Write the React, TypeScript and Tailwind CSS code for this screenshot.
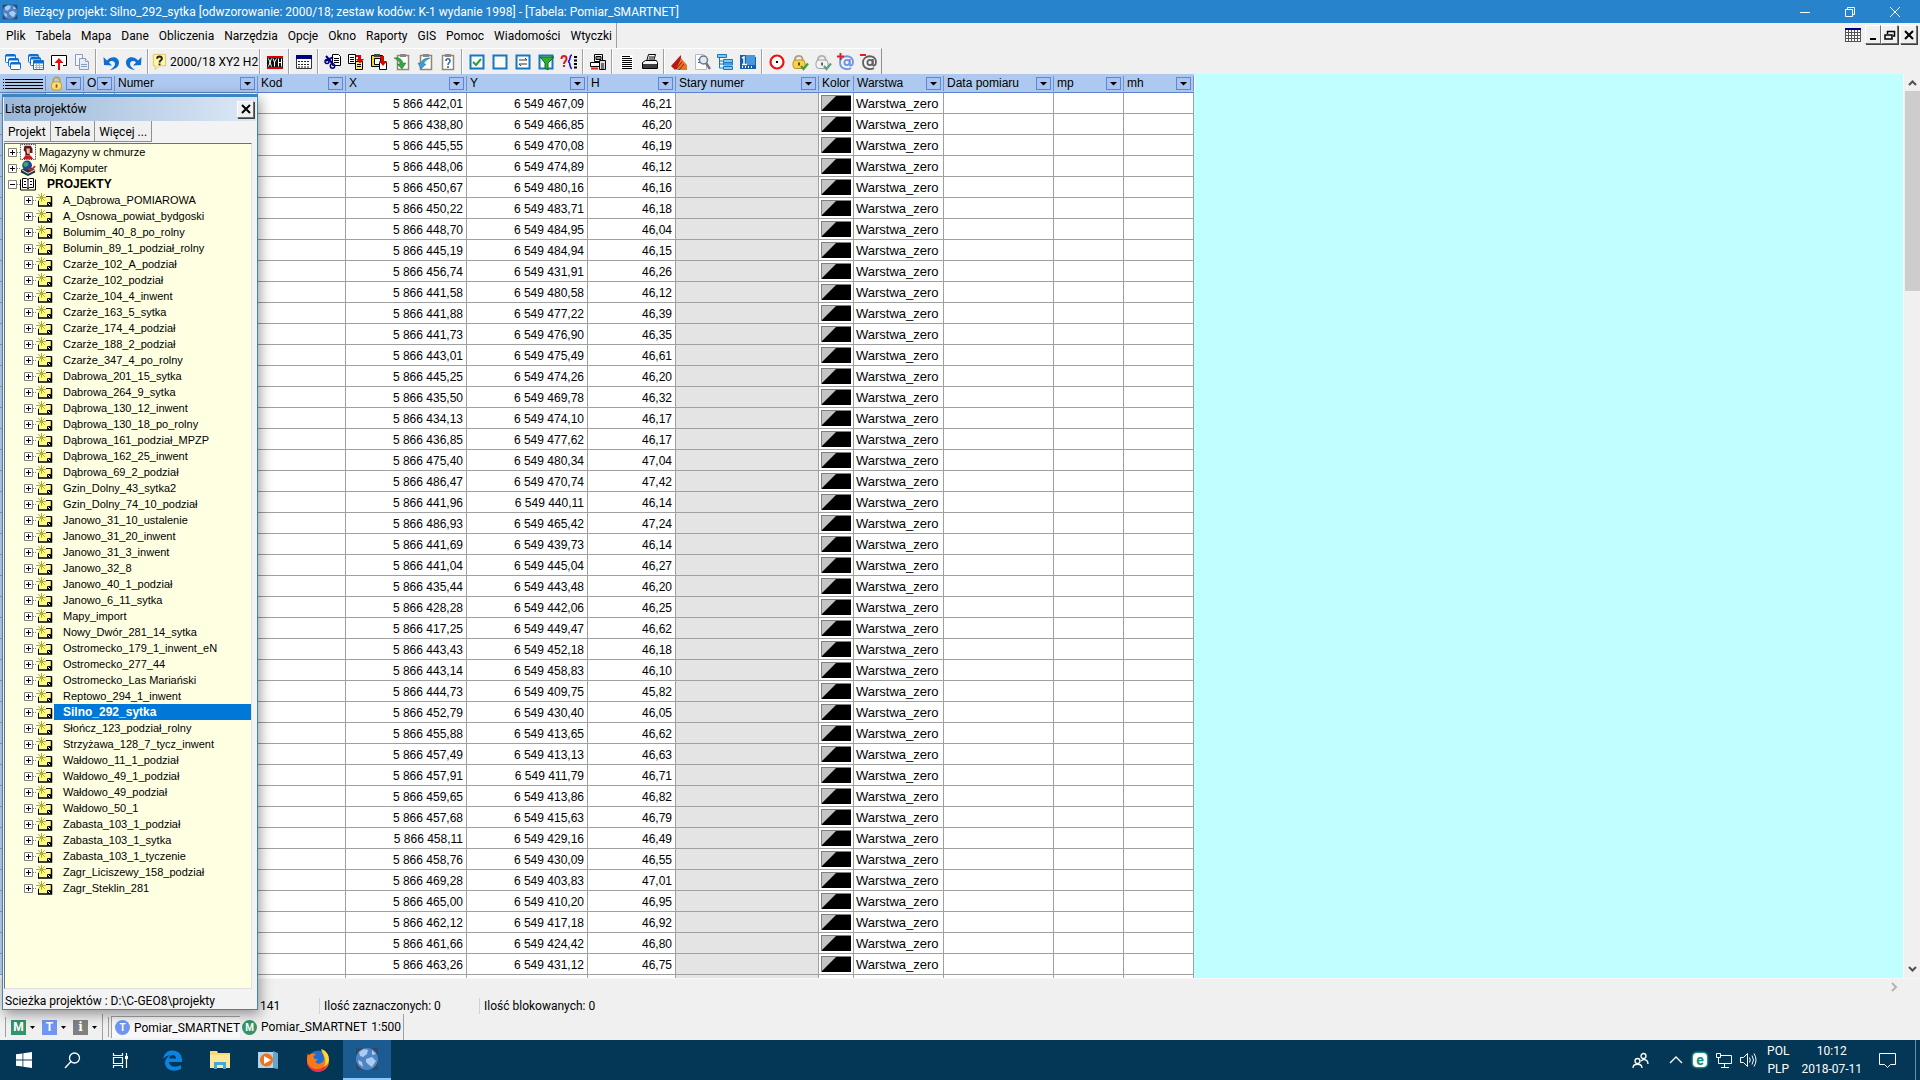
import React from "react";

type Cell = [string, string, string];

const points: Cell[] = [
  ["442,01", "467,09", "46,21"], ["438,80", "466,85", "46,20"], ["445,55", "470,08", "46,19"],
  ["448,06", "474,89", "46,12"], ["450,67", "480,16", "46,16"], ["450,22", "483,71", "46,18"],
  ["448,70", "484,95", "46,04"], ["445,19", "484,94", "46,15"], ["456,74", "431,91", "46,26"],
  ["441,58", "480,58", "46,12"], ["441,88", "477,22", "46,39"], ["441,73", "476,90", "46,35"],
  ["443,01", "475,49", "46,61"], ["445,25", "474,26", "46,20"], ["435,50", "469,78", "46,32"],
  ["434,13", "474,10", "46,17"], ["436,85", "477,62", "46,17"], ["475,40", "480,34", "47,04"],
  ["486,47", "470,74", "47,42"], ["441,96", "440,11", "46,14"], ["486,93", "465,42", "47,24"],
  ["441,69", "439,73", "46,14"], ["441,04", "445,04", "46,27"], ["435,44", "443,48", "46,20"],
  ["428,28", "442,06", "46,25"], ["417,25", "449,47", "46,62"], ["443,43", "452,18", "46,18"],
  ["443,14", "458,83", "46,10"], ["444,73", "409,75", "45,82"], ["452,79", "430,40", "46,05"],
  ["455,88", "413,65", "46,62"], ["457,49", "413,13", "46,63"], ["457,91", "411,79", "46,71"],
  ["459,65", "413,86", "46,82"], ["457,68", "415,63", "46,79"], ["458,11", "429,16", "46,49"],
  ["458,76", "430,09", "46,55"], ["469,28", "403,83", "47,01"], ["465,00", "410,20", "46,95"],
  ["462,12", "417,18", "46,92"], ["461,66", "424,42", "46,80"], ["463,26", "431,12", "46,75"],
];

const projects = [
  "A_Dąbrowa_POMIAROWA", "A_Osnowa_powiat_bydgoski", "Bolumim_40_8_po_rolny", "Bolumin_89_1_podział_rolny",
  "Czarże_102_A_podział", "Czarże_102_podział", "Czarże_104_4_inwent", "Czarże_163_5_sytka",
  "Czarże_174_4_podział", "Czarże_188_2_podział", "Czarże_347_4_po_rolny", "Dabrowa_201_15_sytka",
  "Dabrowa_264_9_sytka", "Dąbrowa_130_12_inwent", "Dąbrowa_130_18_po_rolny", "Dąbrowa_161_podział_MPZP",
  "Dąbrowa_162_25_inwent", "Dąbrowa_69_2_podział", "Gzin_Dolny_43_sytka2", "Gzin_Dolny_74_10_podział",
  "Janowo_31_10_ustalenie", "Janowo_31_20_inwent", "Janowo_31_3_inwent", "Janowo_32_8",
  "Janowo_40_1_podział", "Janowo_6_11_sytka", "Mapy_import", "Nowy_Dwór_281_14_sytka",
  "Ostromecko_179_1_inwent_eN", "Ostromecko_277_44", "Ostromecko_Las Mariański", "Reptowo_294_1_inwent",
  "Silno_292_sytka", "Słończ_123_podział_rolny", "Strzyżawa_128_7_tycz_inwent", "Wałdowo_11_1_podział",
  "Wałdowo_49_1_podział", "Wałdowo_49_podział", "Wałdowo_50_1", "Zabasta_103_1_podział",
  "Zabasta_103_1_sytka", "Zabasta_103_1_tyczenie", "Zagr_Liciszewy_158_podział", "Zagr_Steklin_281",
];

const menu = ["Plik", "Tabela", "Mapa", "Dane", "Obliczenia", "Narzędzia", "Opcje", "Okno", "Raporty", "GIS", "Pomoc", "Wiadomości", "Wtyczki"];

function Svg({ children, size = 18, box = 18 }: { children: React.ReactNode; size?: number; box?: number }) {
  return (
    <svg width={size} height={size} viewBox={`0 0 ${box} ${box}`} fill="none" aria-hidden="true" className="shrink-0">
      {children}
    </svg>
  );
}

const B = "#0f6fd0";

const icons: Record<string, React.ReactNode> = {
  windows: (
    <g stroke={B}>
      <rect x="1.500" y="1.500" width="10" height="8" rx="1" fill="#fff" /><path d="M2 2h9v1H2z" fill={B} />
      <rect x="4.500" y="5.500" width="10" height="8" rx="1" fill="#fff" /><path d="M5 6h9v1H5z" fill={B} />
      <rect x="6.500" y="9.500" width="10" height="7" rx="1" fill="#fff" /><path d="M7 10h9v1H7z" fill={B} />
    </g>
  ),
  windowsGrid: (
    <g stroke={B}>
      <rect x="1.500" y="1.500" width="10" height="8" rx="1" fill="#fff" /><path d="M2 2h9v1H2z" fill={B} />
      <rect x="3.500" y="4.500" width="10" height="8" rx="1" fill="#fff" /><path d="M4 5h9v1H4z" fill={B} />
      <path d="M6.500 7.500h10v9h-10z" fill="#fff" /><path d="M7 8h9v2H7z" fill={B} />
      <path d="M8 12.500h8M8 14.500h8M9.500 11v5M12.500 11v5" stroke="#a8b8cc" />
    </g>
  ),
  upload: (
    <g>
      <path d="M5 12.500H1.500v-10h15v10H13" stroke="#000" fill="#fff" />
      <path d="M9 5l4.500 5H10v7H8v-7H4.500z" fill="#e01010" />
    </g>
  ),
  copy: (
    <g stroke="#8b9cba" fill="#f4f7fc">
      <path d="M2.500 1.500h7v11h-7z" /><path d="M6.500 5.500h6l3 3v8h-9z" fill="#e3ecf8" />
      <path d="M12.500 5.500v3h3M8 11.500h6M8 13.500h6" />
    </g>
  ),
  undo: <path d="M1.500 4l.5 8 8 .5-3-3c2-2.500 6-1.500 6 1.500 0 2-2 4-5 6 5-.5 9-3 9-7.500C17 4 9.500 2 5 7.500z" fill={B} />,
  redo: <path d="M16.500 4l-.5 8-8 .5 3-3c-2-2.500-6-1.500-6 1.500 0 2 2 4 5 6-5-.5-9-3-9-7.500C1 4 8.500 2 13 7.500z" fill={B} />,
  noteHelp: (
    <g>
      <path d="M2.500 1.500h13v12h-7l-4 4v-4h-2z" fill="#fff6a5" stroke="#e0c860" />
      <path d="M6.500 6c0-3 5-3 5 0 0 2-2.500 2-2.500 4M9 11v2" stroke="#222" strokeWidth="2" />
    </g>
  ),
  xyh: (
    <g>
      <path d="M1 3h16v3H1zM1 13h16v3H1z" fill="#d80000" />
      <path d="M1 5h16v9H1z" fill="#111" />
      <path d="M2.500 5.500l3 8M5.500 5.500l-3 8M7 5.500L8.500 9v4.500M10.500 5.500L8.500 9M12.500 5.500v8M15.500 5.500v8M12.500 9.500h3" stroke="#fff" />
    </g>
  ),
  table: (
    <g>
      <path d="M1.500 2.500h15v13h-15z" fill="#fff" stroke="#333" /><path d="M1 2h16v4H1z" fill="#00007c" />
      <path d="M3 8.500h12M3 11.500h12M3 14h12" stroke="#222" strokeDasharray="2 1" />
    </g>
  ),
  cut: (
    <g>
      <path d="M8.500 1.500h6l2 2v9h-8z" fill="#fff" stroke="#000" /><path d="M10 5.500h5M10 7.500h5M10 9.500h5" stroke="#000" />
      <path d="M2 3l7 8M2 8l7-4" stroke="#000080" strokeWidth="2" />
      <circle cx="3" cy="8.500" r="2" stroke="#000080" strokeWidth="1.500" /><circle cx="8.500" cy="13" r="2.200" stroke="#000080" strokeWidth="1.500" />
    </g>
  ),
  copyRed: (
    <g>
      <path d="M1.500 1.500h7v9h-7z" fill="#fff" stroke="#000" /><path d="M3 4.500h4M3 6.500h4M3 8.500h4" stroke="#000" />
      <path d="M8.500 8.500h7v8h-7z" fill="#f8ec60" stroke="#000" /><path d="M10 11.500h4M10 13.500h4" stroke="#000" />
      <path d="M9 2h5v4h3l-4 4.500L9 6h2V4H9z" fill="#e00000" />
    </g>
  ),
  pasteRed: (
    <g>
      <path d="M1.500 2.500h11v11h-11z" fill="#e8dc20" stroke="#000" /><path d="M4.500 5.500h6v6h-6z" fill="#fff" stroke="#000" />
      <path d="M4 1h6v3H4z" fill="#444" /><path d="M9.500 9.500h7v7h-7z" fill="#fff" stroke="#000" />
      <path d="M10 3h4v5h3l-4 5-4-5h2V5h-1z" fill="#e00000" />
    </g>
  ),
  clipGreen: (
    <g>
      <path d="M4.500 2.500h11v14h-11z" fill="#fff" stroke="#94856f" strokeWidth="1.500" /><path d="M7 1h6v3H7z" fill="#888" />
      <path d="M1 5c5-1 8 1 9 5h3l-4 6-5-5h3c0-3-3-4-6-6z" fill="#35a545" stroke="#1e7030" strokeWidth=".5" />
    </g>
  ),
  clipBlue: (
    <g>
      <path d="M4.500 2.500h11v14h-11z" fill="#fff" stroke="#94856f" strokeWidth="1.500" /><path d="M7 1h6v3H7z" fill="#888" />
      <path d="M14 5C8 5 6 7 5 10H2l3 6 5-5H8c0-3 3-4 6-6z" fill="#3c9fd0" stroke="#206a98" strokeWidth=".5" />
    </g>
  ),
  clipHelp: (
    <g>
      <path d="M3.500 2.500h11v14h-11z" fill="#fff" stroke="#94856f" strokeWidth="1.500" /><path d="M6 1h6v3H6z" fill="#888" />
      <path d="M7 8c0-3 4-3 4 0 0 2-2 1.500-2 4M9 13v2" stroke="#2c6ea8" strokeWidth="1.600" />
    </g>
  ),
  checkBox: (
    <g>
      <path d="M2.500 2.500h13v13h-13z" fill="#fff" stroke="#1378c0" strokeWidth="2" /><path d="M5 9l3 3 5-6" stroke="#28a038" strokeWidth="2" />
    </g>
  ),
  emptyBox: <path d="M2.500 2.500h13v13h-13z" fill="#fcfaf4" stroke="#1378c0" strokeWidth="2" />,
  swapBox: (
    <g>
      <path d="M2.500 2.500h13v13h-13z" fill="#fff" stroke="#1378c0" strokeWidth="2" />
      <path d="M5 7h8M11 5l2 2M13 11H5M7 13l-2-2" stroke="#333" />
    </g>
  ),
  filter: (
    <g>
      <path d="M2.500 2.500h13v13h-13z" fill="#fff" stroke="#1378c0" strokeWidth="2" />
      <path d="M3 4h14l-6 6v7l-3-2v-5z" fill="#30b030" stroke="#0c6a18" />
    </g>
  ),
  query: (
    <g>
      <path d="M1.500 6c0-4 5-4 5 0 0 2-2.500 2-2.500 5M4 12v2" stroke="#e01818" strokeWidth="2" />
      <path d="M12 2c-3 0-1 6-4 6.500 3 .5 1 7 4 7" stroke="#1010e0" strokeWidth="1.500" />
      <path d="M15.500 3v13" stroke="#000" strokeWidth="3" strokeDasharray="2 1.500" />
    </g>
  ),
  device: (
    <g stroke="#000">
      <path d="M5.500 1.500h8v7h-8z" fill="#fff" /><path d="M7 3.500h5v3H7z" fill="#999" />
      <path d="M1.500 9.500h10v4h-10z" fill="#fff" /><path d="M10.500 7.500h6v9h-6z" fill="#ddd" /><path d="M12 11h3M12 13h3M12 15h3" />
      <path d="M2 15.500h7" stroke="#e02020" strokeWidth="2" />
    </g>
  ),
  lines: (
    <g>
      <path d="M3 2h12v14H3z" fill="#fff" /><path d="M4 3.500h8M4 5.500h10M4 7.500h10M4 9.500h10M4 11.500h10M4 13.500h10M4 15.500h10" stroke="#000" />
    </g>
  ),
  printer: (
    <g stroke="#000">
      <path d="M5.500 8.500l2-7h7l-2 7z" fill="#fff" /><path d="M8 4h5M7.500 6h5" />
      <path d="M1.500 9.500l3-2h11l1 2v6h-15z" fill="#f4f4f4" /><path d="M2 12h14M2 14h14" strokeWidth="1.500" />
    </g>
  ),
  eraser: (
    <g>
      <path d="M1 13l8-9 2-2v8l-6 7z" fill="#c01818" /><path d="M11 5l6 7v5H6z" fill="#e07828" />
      <path d="M3 14l7-7M6 16l6-7M9 17l5-6" stroke="#901818" />
    </g>
  ),
  preview: (
    <g>
      <path d="M2.500 1.500h8l3 3v12h-11z" fill="#fdfdff" stroke="#b8b8cc" /><path d="M5 6.500h4M5 9.500h5" stroke="#56b" />
      <circle cx="10.500" cy="7" r="4" fill="#dcecfa" stroke="#777" strokeWidth="1.500" /><path d="M13 10l4 6" stroke="#777" strokeWidth="2.500" />
    </g>
  ),
  tree: (
    <g fill="#88c8f0" stroke="#1378c0">
      <path d="M1.500 1.500h9v3h-9zM7.500 6.500h9v3h-9zM7.500 13.500h9v3h-9z" /><path d="M7.500 10h9v2h-9z" /><path d="M3.500 5v10H7M3.500 8H7M3.500 11H7" fill="none" />
    </g>
  ),
  ruler: (
    <g>
      <path d="M1 2h8l8 2v12H1z" fill="#1460b0" /><path d="M7 2h9v10H7z" fill="#4898dc" />
      <path d="M3 5l2-1v7M3 11.500h5" stroke="#fff" strokeWidth="1.500" /><path d="M3 14h12" stroke="#fff" strokeDasharray="1 2" strokeWidth="2" />
    </g>
  ),
  target: (
    <g><circle cx="9" cy="9" r="6.500" fill="#fff" stroke="#f01010" strokeWidth="2.200" /><path d="M8 8h2v2H8z" fill="#000" /></g>
  ),
  lockGold: (
    <g>
      <path d="M4 8V5.500a4 4 0 0 1 7.500 0V8" stroke="#a9a07c" strokeWidth="1.800" /><rect x="2" y="7" width="12" height="8.500" rx="3" fill="#f8d348" stroke="#b8902c" />
      <path d="M8 9.500v3" stroke="#604808" strokeWidth="2" /><path d="M10 13l2.500 3L17 10.500" stroke="#489c30" strokeWidth="2.200" />
    </g>
  ),
  lockGray: (
    <g>
      <path d="M4 8V5.500a4 4 0 0 1 7.500 0V8" stroke="#b0b0b0" strokeWidth="1.800" /><rect x="2" y="7" width="12" height="8.500" rx="3" fill="#f2f2f2" stroke="#a0a0a0" />
      <path d="M8 9.500v3" stroke="#666" strokeWidth="2" /><path d="M10 13l2.500 3L17 10.500" stroke="#58a080" strokeWidth="2.200" />
    </g>
  ),
  atPlus: (
    <g>
      <circle cx="10" cy="9.500" r="2.600" stroke="#6c94e4" strokeWidth="1.800" />
      <path d="M12.800 6v5.500c0 2 3.200 1.500 3.200-2.500 0-8-13-7.500-13 .5 0 7 8 7.500 11 5.500" stroke="#6c94e4" strokeWidth="1.800" />
      <path d="M0 3.500h7M3.500 0v7" stroke="#e02020" strokeWidth="2" />
    </g>
  ),
  atMinus: (
    <g>
      <circle cx="10" cy="9.500" r="2.600" stroke="#606060" strokeWidth="1.800" />
      <path d="M12.800 6v5.500c0 2 3.200 1.500 3.200-2.500 0-8-13-7.500-13 .5 0 7 8 7.500 11 5.500" stroke="#606060" strokeWidth="1.800" />
      <path d="M0 2h6" stroke="#e02020" strokeWidth="2" />
    </g>
  ),
};

function ToolButton({ name }: { name: string }) {
  return (
    <button type="button" aria-label={name} className="flex h-[23px] w-[23px] shrink-0 items-center justify-center">
      <Svg>{icons[name]}</Svg>
    </button>
  );
}

function Divider() {
  return (
    <div className="flex h-[25px] w-[6px] shrink-0 justify-center">
      <div className="w-px bg-[#a0a0a0]" />
      <div className="w-px bg-white" />
    </div>
  );
}

function Toolbar() {
  const group = (names: string[]) => names.map((n) => <ToolButton key={n} name={n} />);
  return (
    <div className="flex h-[26px] shrink-0 bg-[#f0f0f0]">
      <div className="flex items-center border-t border-r border-t-white border-r-[#909090] pl-px pr-px">
        {group(["windows", "windowsGrid", "upload", "copy"])}
        <Divider />
        {group(["undo", "redo"])}
        <Divider />
        <button type="button" className="flex h-[23px] w-[106px] items-center gap-[2px] whitespace-nowrap">
          <Svg size={17}>{icons.noteHelp}</Svg>
          2000/18 XY2 H2
        </button>
        <Divider />
        {group(["xyh"])}
        <Divider />
        {group(["table"])}
        <Divider />
        {group(["cut", "copyRed", "pasteRed", "clipGreen", "clipBlue", "clipHelp"])}
        <Divider />
        {group(["checkBox", "emptyBox", "swapBox", "filter", "query"])}
        <Divider />
        {group(["device"])}
        <Divider />
        {group(["lines", "printer"])}
        <Divider />
        {group(["eraser", "preview", "tree", "ruler"])}
        <Divider />
        {group(["target", "lockGold", "lockGray", "atPlus", "atMinus"])}
      </div>
    </div>
  );
}

function Globe({ size }: { size: number }) {
  return (
    <Svg size={size} box={24}>
      <rect x="1" y="1" width="22" height="22" fill="#2f4a68" />
      <circle cx="12" cy="12" r="11" fill="#4f83c4" />
      <path d="M4 5l5-3 4 1-1 4-4 3-3-1zM11 12l6-2 4 4-4 6-3-2-3-3zM17 3l4 4-4 1zM3 13l4 2 1 5-4-3z" fill="#a9cdf0" />
    </Svg>
  );
}

function TitleBar() {
  return (
    <header className="flex h-[23px] shrink-0 items-center bg-[#2883cd] text-white">
      <div className="ml-[2px] mr-[5px]"><Globe size={16} /></div>
      <h1 className="flex-1 whitespace-nowrap">
        Bieżący projekt: Silno_292_sytka [odwzorowanie: 2000/18; zestaw kodów: K-1 wydanie 1998] - [Tabela: Pomiar_SMARTNET]
      </h1>
      <div className="mr-[2px] flex">
        <button type="button" aria-label="Minimalizuj" className="flex h-[20px] w-[45px] items-center justify-center">
          <Svg size={12} box={12}><path d="M1 6.500h10" stroke="#fff" /></Svg>
        </button>
        <button type="button" aria-label="Przywróć" className="flex h-[20px] w-[45px] items-center justify-center">
          <Svg size={12} box={12}><path d="M1.500 3.500h7v7h-7zM3.500 3V1.500h7v7H9" stroke="#fff" /></Svg>
        </button>
        <button type="button" aria-label="Zamknij" className="flex h-[20px] w-[46px] items-center justify-center">
          <Svg size={12} box={12}><path d="M1 1l10 10M11 1L1 11" stroke="#fff" /></Svg>
        </button>
      </div>
    </header>
  );
}

const raised = "flex items-center justify-center border border-t-white border-l-white border-r-[#707070] border-b-[#707070] shadow-[1px_1px_0_#404040] bg-[#f0f0f0]";

function MenuBar() {
  return (
    <div className="flex h-[25px] shrink-0 bg-[#f0f0f0]">
      <nav className="flex items-center gap-[10px] border-r border-[#a0a0a0] pl-[6px] pr-[4px]">
        {menu.map((m) => (
          <button key={m} type="button">{m}</button>
        ))}
      </nav>
      <div className="ml-auto flex items-start pt-[2px] pr-[3px]">
        <div className="mt-[3px] mr-[4px]">
          <Svg size={16} box={16}>
            <path d="M0 0h16v14H0z" fill="#fff" />
            <path d="M0 4.500h16M0 7.500h16M0 10.500h16M0 13.500h16M.5 2v12M3.500 2v12M6.500 2v12M9.500 2v12M12.500 2v12M15.500 2v12" stroke="#555" />
            <path d="M0 0h16v2H0z" fill="#00007c" />
          </Svg>
        </div>
        <button type="button" aria-label="Minimalizuj tabelę" className={`${raised} h-[19px] w-[16px]`}>
          <Svg size={12} box={12}><path d="M3 10h6" stroke="#000" strokeWidth="2" /></Svg>
        </button>
        <button type="button" aria-label="Przywróć tabelę" className={`${raised} h-[19px] w-[17px]`}>
          <Svg size={12} box={12}><path d="M1 6h7v4H1zM3.500 5V2.500h7V7H9" stroke="#000" strokeWidth="1.500" /></Svg>
        </button>
        <button type="button" aria-label="Zamknij tabelę" className={`${raised} ml-[2px] h-[19px] w-[17px]`}>
          <Svg size={10} box={10}><path d="M1 1l8 8M9 1L1 9" stroke="#000" strokeWidth="2" /></Svg>
        </button>
      </div>
    </div>
  );
}

function FilterButton({ label }: { label: string }) {
  return (
    <button type="button" aria-label={`Filtruj ${label}`} className="mr-[2px] flex h-[13px] w-[15px] shrink-0 items-center justify-center border border-[#5c86d6] bg-[#a9c3f2]">
      <Svg size={7} box={7}><path d="M0 2h7L3.500 5.500z" fill="#000" /></Svg>
    </button>
  );
}

const columns: { label: string; width: string; filter: boolean }[] = [
  { label: "Nr", width: "w-[46px]", filter: false },
  { label: "Blokada", width: "w-[38px]", filter: true },
  { label: "O", width: "w-[31px]", filter: true },
  { label: "Numer", width: "w-[143px]", filter: true },
  { label: "Kod", width: "w-[88px]", filter: true },
  { label: "X", width: "w-[121px]", filter: true },
  { label: "Y", width: "w-[121px]", filter: true },
  { label: "H", width: "w-[88px]", filter: true },
  { label: "Stary numer", width: "w-[143px]", filter: true },
  { label: "Kolor", width: "w-[35px]", filter: false },
  { label: "Warstwa", width: "w-[90px]", filter: true },
  { label: "Data pomiaru", width: "w-[110px]", filter: true },
  { label: "mp", width: "w-[70px]", filter: true },
  { label: "mh", width: "w-[70px]", filter: true },
];

function HeadContent({ label }: { label: string }) {
  if (label === "Nr")
    return (
      <svg width="40" height="11" viewBox="0 0 40 11" aria-label="Nr">
        <path d="M2 1.500h38M2 4.500h38M2 7.500h38M2 10.500h38" stroke="#000" />
        <path d="M0 1.500h1M0 4.500h1M0 7.500h1M0 10.500h1" stroke="#000" />
      </svg>
    );
  if (label === "Blokada")
    return (
      <Svg size={15}>
        <path d="M5 8V5.500a4 4 0 0 1 8 0V8" stroke="#c89828" strokeWidth="1.800" />
        <rect x="3" y="7" width="12" height="10" rx="4" fill="#ffe070" stroke="#c09020" />
        <path d="M9 10v4" stroke="#805808" strokeWidth="2" />
      </Svg>
    );
  return <>{label}</>;
}

const td = "border-r border-b border-[#a0a0a0] p-0";
const num = "border-r border-b border-[#a0a0a0] p-0 pt-px pr-[3px] text-right";

function Swatch() {
  return (
    <svg width="30" height="16" viewBox="0 0 30 16" className="mx-auto block" aria-hidden="true">
      <rect width="30" height="16" fill="#000" />
      <path d="M0 0h16L0 16z" fill="#c4c4c4" />
      <path d="M0 .5h30M.5 0v16" stroke="#808080" />
    </svg>
  );
}

function DataTable() {
  return (
    <table className="w-[1194px] table-fixed border-separate border-spacing-0 bg-white font-['Liberation_Sans',sans-serif] text-[12px] leading-[14px]">
      <thead>
        <tr>
          {columns.map((c) => (
            <th key={c.label} scope="col" className={`${c.width} h-[19px] border-b border-[#5f83c8] bg-[#aec9ef] p-0 text-left font-normal`}>
              <div className="flex h-[15px] items-center justify-between border-r border-[#7292cf] shadow-[1px_0_0_#fff]">
                <span className="flex items-center pl-[3px] whitespace-nowrap"><HeadContent label={c.label} /></span>
                {c.filter && <FilterButton label={c.label} />}
              </div>
            </th>
          ))}
        </tr>
      </thead>
      <tbody>
        {points.map(([x, y, h], i) => (
          <tr key={i} className="h-[21px]">
            <td className={`${td} bg-[#c4d8f6]`} />
            <td className={td} />
            <td className={td} />
            <td className={td} />
            <td className={td} />
            <td className={num}>5 866 {x}</td>
            <td className={num}>6 549 {y}</td>
            <td className={num}>{h}</td>
            <td className={`${td} bg-[#e4e4e4]`} />
            <td className={td}><Swatch /></td>
            <td className="border-r border-b border-[#a0a0a0] p-0 pt-px pl-[2px] text-[13px]">Warstwa_zero</td>
            <td className={td} />
            <td className={td} />
            <td className={td} />
          </tr>
        ))}
        <tr className="h-[21px]">
          {columns.map((c) => (
            <td key={c.label} className={c.label === "Stary numer" ? `${td} bg-[#e4e4e4]` : td} />
          ))}
        </tr>
      </tbody>
    </table>
  );
}

function Expander({ open = false }: { open?: boolean }) {
  return (
    <button type="button" aria-label={open ? "Zwiń" : "Rozwiń"} className="shrink-0">
      <svg width="9" height="9" viewBox="0 0 9 9" className="block">
        <path d="M.5.5h8v8h-8z" fill="#fff" stroke="#808080" />
        <path d={open ? "M2 4.500h5" : "M2 4.500h5M4.500 2v5"} stroke="#000" />
      </svg>
    </button>
  );
}

function Dots() {
  return <span className="w-[3px] shrink-0 border-t border-dotted border-[#808080]" />;
}

function ProjectIcon() {
  return (
    <svg width="17" height="16" viewBox="0 0 17 16" className="shrink-0" aria-hidden="true">
      <path d="M2.500 4.500h13v9h-13z" fill="#fff98a" />
      <path d="M2.500 9v5.500M10 4.500h5.500" stroke="#000" fill="none" />
      <path d="M2 14h13.500V4.500" stroke="#000" strokeWidth="1.500" fill="none" />
      <path d="M11.500 10.500h3v3h-3zM12 13l2-2" fill="#fff" stroke="#000" />
      <path d="M0 5.500h10M5.500 1v9M2 2l7 7M9 2L2 9" stroke="#b0b030" fill="none" />
    </svg>
  );
}

function ProjectTree() {
  return (
    <ul className="m-0 min-h-0 flex-1 overflow-hidden border-t border-l border-r border-b border-t-[#707070] border-l-[#707070] border-r-[#e0e0e0] border-b-[#e0e0e0] bg-[#ffffe1] font-['Liberation_Sans',sans-serif] text-[11px] leading-[16px]">
      <li className="flex h-[16px] items-center pl-[3px]">
        <Expander /><Dots />
        <Svg size={16}>
          <path d="M.5.5h17v17H.5z" fill="#fff" stroke="#000" strokeDasharray="1 1" />
          <path d="M5 2h7l2 3v5h-3v3H6V9L4 7z" fill="#601818" /><path d="M7 5h4v6H8z" fill="#f0b898" /><path d="M3 17l3-4h6l3 4z" fill="#c02020" />
        </Svg>
        <span className="pl-[3px]">Magazyny w chmurze</span>
      </li>
      <li className="flex h-[16px] items-center pl-[3px]">
        <Expander /><Dots />
        <Svg size={16}>
          <path d="M1 11l8-4 8 4v3l-8 4-8-4z" fill="#203838" /><path d="M2 11l7 4 8-4" stroke="#fff" />
          <circle cx="8" cy="6" r="5.500" fill="#1848a0" /><path d="M4 3l4-1 2 3-3 3-3-1z" fill="#40a860" /><path d="M10 9l2 3 5-5" stroke="#e02020" strokeWidth="2" />
        </Svg>
        <span className="pl-[3px]">Mój Komputer</span>
      </li>
      <li>
        <div className="flex h-[16px] items-center pl-[3px]">
          <Expander open /><Dots />
          <Svg size={16} box={16}>
            <path d="M.5 3.500v10.500h15V3.500" stroke="#000" />
            <path d="M2.500 2.500h4l1.500 1 1.500-1h4v9h-4l-1.500 1-1.500-1h-4z" fill="#fff" stroke="#000" />
            <path d="M8 3v10M4 5.500h2M4 8.500h2M10 5.500h2M10 8.500h2" stroke="#000" />
          </Svg>
          <span className="pl-[11px] text-[12px] font-bold">PROJEKTY</span>
        </div>
        <ul className="ml-[7px]">
          {projects.map((p) => {
            const selected = p === "Silno_292_sytka";
            return (
              <li key={p} className="flex h-[16px] items-center pl-[12px]">
                <Expander /><Dots /><ProjectIcon />
                <span className={selected ? "ml-px flex-1 bg-[#0078d7] pl-[9px] text-[12px] font-bold text-white" : "ml-px flex-1 pl-[9px] whitespace-nowrap"}>{p}</span>
              </li>
            );
          })}
        </ul>
      </li>
    </ul>
  );
}

function ProjectWindow() {
  return (
    <section className="absolute top-[94px] bottom-[70px] left-[2px] flex w-[256px] flex-col border-t-3 border-r border-b border-l border-[#3c86c0] bg-[#f3f3f3] px-px shadow-[2px_4px_12px_rgba(0,0,0,0.4)]">
      <div className="flex h-[24px] shrink-0 items-center justify-between bg-gradient-to-r from-[#9bb7d8] to-[#dce8f6] pl-px pr-[2px]">
        <h2>Lista projektów</h2>
        <button type="button" aria-label="Zamknij listę" className={`${raised} h-[17px] w-[17px]`}>
          <Svg size={10} box={10}><path d="M1 1l8 8M9 1L1 9" stroke="#000" strokeWidth="2" /></Svg>
        </button>
      </div>
      <div className="mb-px flex h-[21px] shrink-0">
        {["Projekt", "Tabela", "Więcej ..."].map((t) => (
          <button key={t} type="button" className="border-r border-b border-[#909090] bg-[#f0f0f0] px-[4px] pt-px">{t}</button>
        ))}
      </div>
      <div className="mr-[4px] flex min-h-0 flex-1 flex-col"><ProjectTree /></div>
      <p className="flex h-[20px] shrink-0 items-center pt-[3px] pl-px">Scieżka projektów : D:\C-GEO8\projekty</p>
    </section>
  );
}

function LetterBadge({ letter, className }: { letter: string; className: string }) {
  return <span className={`flex h-[15px] w-[15px] shrink-0 items-center justify-center font-bold leading-[15px] text-white ${className}`}>{letter}</span>;
}

function Caret() {
  return <Svg size={5} box={5}><path d="M0 1h5L2.500 4z" fill="#000" /></Svg>;
}

function BottomBars() {
  return (
    <div className="shrink-0 bg-[#f0f0f0]">
      <div className="flex h-[17px] justify-end border-t border-[#f8f8f8] pr-[21px]">
        <svg width="10" height="16" viewBox="0 0 10 16" aria-hidden="true"><path d="M3 4l4 4-4 4" fill="none" stroke="#b4b4b4" strokeWidth="2" /></svg>
      </div>
      <div className="flex h-[19px] items-center pt-[3px]">
        <span className="w-[319px] pl-[260px]">141</span>
        <span className="w-[160px] border-l border-[#d0d0d0] pl-[4px]">Ilość zaznaczonych: 0</span>
        <span className="border-l border-[#d0d0d0] pl-[4px]">Ilość blokowanych: 0</span>
      </div>
      <div className="flex h-[26px]">
        <div className="flex w-[103px] items-center border-r border-[#a0a0a0] pl-[5px]">
          <div className="mr-[5px] h-[20px] w-px bg-[#a0a0a0]" />
          <button type="button" className="flex w-[31px] items-center gap-[4px]"><LetterBadge letter="M" className="bg-[#329468] text-[12px]" /><Caret /></button>
          <button type="button" className="flex w-[31px] items-center gap-[4px]"><LetterBadge letter="T" className="bg-[#6f96f4] text-[12px]" /><Caret /></button>
          <button type="button" className="flex items-center gap-[4px]"><LetterBadge letter="i" className="bg-[#808080] font-['DejaVu_Serif',serif] text-[12px]" /><Caret /></button>
        </div>
        <div className="flex items-center border-r border-[#a0a0a0] pl-[5px] pr-[2px]">
          <div className="mr-[2px] h-[20px] w-px bg-[#a0a0a0]" />
          <button type="button" className="flex h-[22px] items-center gap-[4px] border-t border-l border-[#a0a0a0] bg-[#f8f8f8] pl-[3px] whitespace-nowrap">
            <LetterBadge letter="T" className="rounded-full bg-[#6f96f4] text-[10px]" />Pomiar_SMARTNET
          </button>
          <button type="button" className="flex h-[22px] items-center gap-[4px] pl-[2px] whitespace-nowrap">
            <LetterBadge letter="M" className="rounded-full bg-[#329468] text-[10px]" />Pomiar_SMARTNET<span>1:500</span>
          </button>
        </div>
      </div>
    </div>
  );
}

function TaskButton({ label, active = false, children }: { label: string; active?: boolean; children: React.ReactNode }) {
  return (
    <button type="button" aria-label={label} className={active ? "ml-px flex h-[40px] w-[48px] items-center justify-center border-b-2 border-[#8cc8f8] bg-[#1a5c92]" : "flex h-[40px] w-[48px] items-center justify-center"}>
      {children}
    </button>
  );
}

function Taskbar() {
  return (
    <footer className="flex h-[40px] shrink-0 items-center bg-[#043656] text-white">
      <TaskButton label="Start"><Svg size={16} box={16}><path d="M0 2.300L6.500 1.400v6.200H0zM7.300 1.300L16 0v7.600H7.300zM0 8.400h6.500v6.200L0 13.700zM7.300 8.400H16V16l-8.700-1.300z" fill="#fff" /></Svg></TaskButton>
      <TaskButton label="Szukaj"><Svg size={17} box={17}><circle cx="10.500" cy="6" r="5" stroke="#fff" strokeWidth="1.300" /><path d="M7 9.500L1 16" stroke="#fff" strokeWidth="1.300" /></Svg></TaskButton>
      <TaskButton label="Widok zadań"><Svg size={17} box={17}><path d="M1.500 1v2.500h9V1M1.500 5.500h9v6h-9zM1.500 16v-2.500h9V16M14.500 1v15" stroke="#fff" strokeWidth="1.200" /><path d="M13 4h3v3h-3z" fill="#fff" /></Svg></TaskButton>
      <div className="w-[4px]" />
      <TaskButton label="Edge">
        <Svg size={21} box={21}><path d="M1 9C2 3 6 .5 10.500.5 16 .5 20 4.500 20 10v2H7c.3 5 7 6 12 3v4c-7 3.500-15.500 1.500-16-6C3 9.500 5 7 8 5.500 4.500 5.500 2 7.500 1 9zm6.200-.5H14c0-5-6.500-4.500-6.800 0z" fill="#0a84e0" fillRule="evenodd" /></Svg>
      </TaskButton>
      <TaskButton label="Eksplorator">
        <Svg size={22} box={22}><path d="M1 2h7l1 2h12v15H1z" fill="#f6d978" /><path d="M1 6h20v13H1z" fill="#fbe89c" /><path d="M5 20v-7h12v7h-3v-4H8v4z" fill="#48a8dc" /></Svg>
      </TaskButton>
      <TaskButton label="Odtwarzacz">
        <Svg size={20} box={20}><path d="M0 2h17v16H0z" fill="#b4d4e8" /><path d="M15 1l5 2v16l-5-1z" fill="#68a4cc" /><circle cx="8.500" cy="10" r="6.500" fill="#f07020" /><path d="M6 6l7 4-7 4z" fill="#fff" /></Svg>
      </TaskButton>
      <div className="w-[2px]" />
      <TaskButton label="Firefox">
        <Svg size={24} box={24}>
          <circle cx="12" cy="12.500" r="10" fill="#1f6fd0" />
          <path d="M2 5c0 2 1 2 1 2C5 5 9 5 10 7c-3 0-3 3-1 4 1 0 3-.5 3 .5-1 1-3 1-2 3 3 3 8 0 8-4 0-3-2-5-3-8 6 1 8 6 8 11 0 6-5 10-11 10S1 19 1 13c0-3 0-6 1-8z" fill="#f47a1c" />
          <path d="M1 13c1 5 6 9 12 8 5-1 8-5 8-9 2 6-3 12-9 12S1 19 1 13z" fill="#e8304c" /><path d="M15 1c6 2 8 6 8 11-1 4-3 6-5 7 3-6 1-10-3-18z" fill="#fdd83a" />
        </Svg>
      </TaskButton>
      <TaskButton label="C-GEO" active><Globe size={24} /></TaskButton>
      <div className="ml-auto flex items-center">
        <button type="button" aria-label="Kontakty" className="mr-[20px]"><Svg size={17} box={17}><circle cx="11.500" cy="4" r="2.500" stroke="#fff" strokeWidth="1.300" /><circle cx="5.500" cy="9" r="2.500" stroke="#fff" strokeWidth="1.300" /><path d="M1 16c0-5 9-5 9 0M9 9c3-3 7-1 7 3" stroke="#fff" strokeWidth="1.300" /></Svg></button>
        <button type="button" aria-label="Ukryte ikony" className="mr-[10px]"><Svg size={14} box={14}><path d="M1 10l6-6 6 6" stroke="#fff" strokeWidth="1.300" /></Svg></button>
        <span className="mr-[8px] flex h-[14px] w-[14px] items-center justify-center rounded-sm bg-white text-[14px] leading-[14px] font-bold text-[#109080] shadow-[0_0_2px_1px_#30b0a0]">e</span>
        <button type="button" aria-label="Sieć" className="mr-[7px]"><Svg size={17} box={17}><path d="M5 3.500h11.500v8H3.500V7M9.500 12v3.500M6 15.500h8M1.500 1.500h4v4h-4zM3.500 5.500v3" stroke="#fff" /></Svg></button>
        <button type="button" aria-label="Głośność" className="mr-[10px]"><Svg size={18} box={18}><path d="M1.500 6.500h3l4-4v13l-4-4h-3zM10.500 6.500q1.500 2.500 0 5M13 4.500q3 4.500 0 9M15 2.500q4 6.500 0 13" stroke="#fff" /></Svg></button>
        <div className="mr-[12px] text-center leading-[18px]">POL<br />PLP</div>
        <div className="mr-[17px] text-center leading-[18px]"><time>10:12<br />2018-07-11</time></div>
        <button type="button" aria-label="Powiadomienia" className="mr-[19px]"><Svg size={17} box={17}><path d="M.5 1.500h16v11h-5l-3 3-3-3h-5z" stroke="#fff" /></Svg></button>
        <div className="mr-[4px] h-[40px] w-px bg-[#6c8ca4]" />
      </div>
    </footer>
  );
}

export default function App() {
  return (
    <div className="relative flex h-screen flex-col overflow-hidden bg-[#f0f0f0] font-['Roboto',sans-serif] text-[12px] leading-[16px] text-black">
      <TitleBar />
      <MenuBar />
      <Toolbar />
      <main className="flex min-h-0 flex-1 overflow-hidden">
        <div className="min-w-0 flex-1 overflow-hidden bg-[#bfffff]"><DataTable /></div>
        <div className="flex w-[17px] shrink-0 flex-col items-center justify-between border-l border-white bg-[#f0f0f0]">
          <div className="flex h-full w-full flex-col items-center">
            <svg width="15" height="17" viewBox="0 0 15 17" className="shrink-0" aria-hidden="true"><path d="M4 11l3.500-3.500L11 11" fill="none" stroke="#505050" strokeWidth="2" /></svg>
            <div className="h-[200px] w-[15px] bg-[#cdcdcd]" />
          </div>
          <svg width="15" height="17" viewBox="0 0 15 17" className="shrink-0" aria-hidden="true"><path d="M4 6l3.500 3.500L11 6" fill="none" stroke="#505050" strokeWidth="2" /></svg>
        </div>
      </main>
      <BottomBars />
      <Taskbar />
      <ProjectWindow />
    </div>
  );
}
